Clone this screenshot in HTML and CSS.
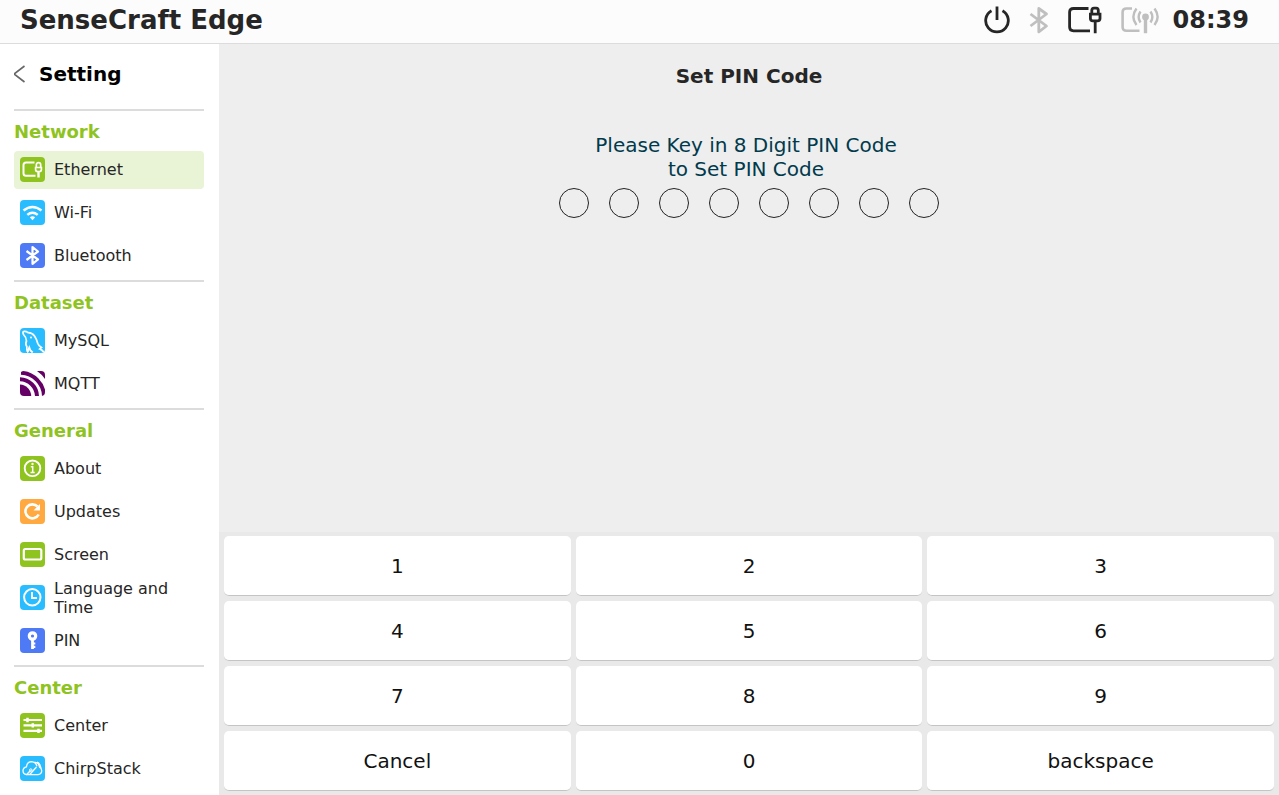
FILE: index.html
```html
<!DOCTYPE html>
<html lang="en">
<head>
<meta charset="utf-8">
<meta name="viewport" content="width=device-width, initial-scale=1">
<title>SenseCraft Edge</title>
<link rel="stylesheet" href="styles.css">
</head>
<body>
<div class="app">
  <header class="topbar">
    <div class="brand">SenseCraft Edge</div>
    <div class="status">
      <div class="status-icons">
        <button class="icon-button" type="button" aria-label="Power">
          <svg width="26" height="28" viewBox="0 0 26 28" fill="none" stroke="#262626" stroke-width="2.800"><path d="M13 .5v13.500"/><path d="M7.500 4.800A11.300 11.300 0 1 0 18.500 4.800"/></svg>
        </button>
        <svg width="20" height="28" viewBox="0 0 20 28" fill="none" stroke="#bfbfbf" stroke-width="2.800" stroke-linejoin="round" role="img" aria-label="Bluetooth"><path d="M1.500 8L17.500 20 9.800 25.800V2.500L17.500 8 1.500 20"/></svg>
        <svg width="34" height="28" viewBox="0 0 34 28" fill="none" stroke="#262626" stroke-width="2.800" role="img" aria-label="Ethernet"><path d="M20.500 2.500H5.500Q1.600 2.500 1.600 6V21Q1.600 24.800 5.500 24.800H22"/><path d="M23.800 7.500V4.600Q23.800 2.200 26 2.200h2.200Q30.300 2.200 30.300 4.600V7.500M22.400 8.200H32V12.500Q32 14.800 29.500 14.800H24.900Q22.400 14.800 22.400 12.500ZM27.200 14.800V27.200"/></svg>
        <svg width="38" height="28" viewBox="0 0 38 28" fill="none" stroke="#bfbfbf" stroke-width="2.600" role="img" aria-label="LoRa"><path d="M11 2.500H5.500Q1.600 2.500 1.600 6V21Q1.600 24.800 5.500 24.800H18.500"/><path d="M24.500 12V27.200" stroke-width="3.400"/><circle cx="24.500" cy="11" r="3.400" fill="#bfbfbf" stroke="none"/><path d="M19.500 5.500Q15.800 11 19.500 16.500M29.500 5.500Q33.200 11 29.500 16.500M15.500 2.500Q9.200 11 15.500 19M33.500 2.500Q39.800 11 33.500 19" stroke-width="2.400"/></svg>
      </div>
      <time class="clock">08:39</time>
    </div>
  </header>

  <div class="body">
    <nav class="sidebar" aria-label="Setting">
      <a class="back" href="#">
        <svg width="12" height="18" viewBox="0 0 12 18" fill="none" stroke="#666" stroke-width="1.600"><path d="M10.500 1L0 9l10.500 8"/></svg>
        <span>Setting</span>
      </a>

      <section class="group">
        <h2 class="group-title">Network</h2>
        <a class="item active" href="#">
          <svg class="tile green" viewBox="0 0 25 25"><path d="M14.500 5.500H6Q3.500 5.500 3.500 8v8.200Q3.500 18.700 6 18.700h9.500" stroke-width="2"/><path d="M15.600 10.500h5.800v2a2 2 0 0 1-2 2h-1.800a2 2 0 0 1-2-2zM16.300 10V8q0-2.300 2.200-2.300T20.700 8v2" stroke-width="1.700"/><path d="M18.500 14v6.500" stroke-width="2.400"/></svg>
          <span>Ethernet</span>
        </a>
        <a class="item" href="#">
          <svg class="tile sky" viewBox="0 0 25 25"><path d="M3.500 10.600q9-7.200 18 0M7.300 14.900q5.200-4.300 10.400 0" stroke-width="2.500"/><path class="solid" d="M9.800 17.300q2.700-2 5.400 0L12.500 20.200z"/></svg>
          <span>Wi-Fi</span>
        </a>
        <a class="item" href="#">
          <svg class="tile blue" viewBox="0 0 25 25"><path d="M6.500 8L18 16.500l-5.500 4.300V4L18 8.500 6.500 17" stroke-width="2.200" stroke-linejoin="round"/></svg>
          <span>Bluetooth</span>
        </a>
      </section>

      <section class="group">
        <h2 class="group-title">Dataset</h2>
        <a class="item" href="#">
          <svg class="tile sky" viewBox="0 0 25 25"><path d="M8 24.500q-1.700-2.500-1.200-6Q5 16 6.500 13 6.500 9.500 3.500 6.500 2.200 3.500 4 3.400q2-.4 4 1.200Q12 4.500 14.500 8q2 3 3.200 7.200.8 2.500 3.800 4.300l-1.700 1.400q2 .8 4.200 3.300" stroke-width="1.700"/><path d="M7.500 24l1.800-4.500 1.200 3 2.200 2" stroke-width="1.900"/><circle class="solid" cx="11" cy="9.500" r="1"/></svg>
          <span>MySQL</span>
        </a>
        <a class="item" href="#">
          <svg class="tile plain" viewBox="0 0 25 25"><defs><clipPath id="tile-clip"><rect width="25" height="25" rx="4"/></clipPath></defs><g clip-path="url(#tile-clip)"><path class="purple" d="M0 13.500A11.800 11.800 0 0 1 11.200 25H0z"/><path class="purple-line" d="M-1 8.200A17.600 17.600 0 0 1 17 26M1 1.800A24 24 0 0 1 24 25" stroke-width="4"/><path class="purple" d="M17 0H25v8Q21.500 3 17 0z"/></g></svg>
          <span>MQTT</span>
        </a>
      </section>

      <section class="group">
        <h2 class="group-title">General</h2>
        <a class="item" href="#">
          <svg class="tile green" viewBox="0 0 25 25"><circle cx="12.500" cy="12.300" r="7.800" stroke-width="1.900"/><path d="M10.800 10.800h1.900v6M10.500 16.500h4.200" stroke-width="1.500"/><circle class="solid" cx="12.500" cy="8" r="1.200"/></svg>
          <span>About</span>
        </a>
        <a class="item" href="#">
          <svg class="tile orange" viewBox="0 0 25 25"><path d="M18.700 15.500A7 7 0 1 1 17.500 7.500" stroke-width="2.600"/><path class="solid" d="M20 5v6.500h-6.500z"/></svg>
          <span>Updates</span>
        </a>
        <a class="item" href="#">
          <svg class="tile green" viewBox="0 0 25 25"><rect x="3.800" y="7" width="17.500" height="10.500" rx="1.500" stroke-width="2.200"/></svg>
          <span>Screen</span>
        </a>
        <a class="item" href="#">
          <svg class="tile sky" viewBox="0 0 25 25"><circle cx="12.300" cy="12.300" r="8.200" stroke-width="2"/><path d="M12 7v6h5" stroke-width="1.900"/></svg>
          <span>Language and Time</span>
        </a>
        <a class="item" href="#">
          <svg class="tile blue" viewBox="0 0 25 25"><circle cx="12.500" cy="8" r="3.200" stroke-width="3.200"/><path d="M12.500 11v10" stroke-width="2.800"/><path d="M13 15.500h2.300M13 18.800h2.300" stroke-width="2.200"/></svg>
          <span>PIN</span>
        </a>
      </section>

      <section class="group">
        <h2 class="group-title">Center</h2>
        <a class="item" href="#">
          <svg class="tile green" viewBox="0 0 25 25"><path d="M3.500 7h18.500M3.500 12.400h18.500M3.500 17.900h18.500" stroke-width="2.100"/><path d="M7.500 4.800v4.400M12.800 10.200v4.400M18.500 15.700v4.400" stroke-width="2.500"/></svg>
          <span>Center</span>
        </a>
        <a class="item" href="#">
          <svg class="tile sky" viewBox="0 0 25 25"><path d="M10.500 14.500L6.500 18.700Q3 18 3 14.800 3 11.500 6.500 10.800 7 5.800 11.500 5.700q3.800 0 5.500 4.500M6.500 18.700H18q3.700-.7 3.700-4 0-2.500-2.500-3.800M9.500 18.700l7-7.700M14.500 6.500q4-.5 5 4.500M17 6q3.500 1.500 4 6" stroke-width="1.300"/><circle cx="10.800" cy="14" r="1.200" stroke-width="1"/></svg>
          <span>ChirpStack</span>
        </a>
      </section>
    </nav>

    <main class="main">
      <h1 class="page-title">Set PIN Code</h1>
      <p class="prompt">Please Key in 8 Digit PIN Code<br>to Set PIN Code</p>
      <div class="dots" role="img" aria-label="0 of 8 digits entered">
        <span class="dot"></span><span class="dot"></span><span class="dot"></span><span class="dot"></span><span class="dot"></span><span class="dot"></span><span class="dot"></span><span class="dot"></span>
      </div>
      <div class="keypad">
        <button class="key" type="button">1</button>
        <button class="key" type="button">2</button>
        <button class="key" type="button">3</button>
        <button class="key" type="button">4</button>
        <button class="key" type="button">5</button>
        <button class="key" type="button">6</button>
        <button class="key" type="button">7</button>
        <button class="key" type="button">8</button>
        <button class="key" type="button">9</button>
        <button class="key" type="button">Cancel</button>
        <button class="key" type="button">0</button>
        <button class="key" type="button">backspace</button>
      </div>
    </main>
  </div>
</div>
</body>
</html>
```
FILE: styles.css
```css
* {
  box-sizing: border-box;
}

body {
  margin: 0;
  font-family: "DejaVu Sans", sans-serif;
  font-size: 16px;
  color: #262626;
  background: #eee;
}

a {
  color: inherit;
  text-decoration: none;
}

svg {
  display: block;
  flex-shrink: 0;
}

.app {
  display: flex;
  flex-direction: column;
  min-height: 100vh;
}

/* Top bar */
.topbar {
  display: flex;
  align-items: center;
  justify-content: space-between;
  height: 44px;
  padding: 0 30px 4px 20px;
  background: #fcfcfc;
  border-bottom: 1px solid #dcdcdc;
}

.brand {
  font-size: 26px;
  font-weight: bold;
}

.status {
  display: flex;
  align-items: center;
  gap: 14px;
}

.status-icons {
  display: flex;
  align-items: center;
  gap: 19px;
}

.icon-button {
  padding: 0;
  border: 0;
  background: none;
}

.clock {
  font-size: 24px;
  font-weight: bold;
}

.body {
  display: flex;
  flex: 1;
}

/* Sidebar */
.sidebar {
  width: 219px;
  flex-shrink: 0;
  padding: 0 15px 0 14px;
  background: #fff;
}

.back {
  display: flex;
  align-items: center;
  gap: 13px;
  height: 60px;
  margin-bottom: 5px;
  font-size: 20px;
  font-weight: bold;
  color: #000;
}

.group {
  display: flex;
  flex-direction: column;
  gap: 5px;
  padding-bottom: 5px;
  border-top: 2px solid #dcdcdc;
}

.group-title {
  margin: 0 0 -7px;
  font-size: 18px;
  line-height: 42px;
  color: #8fc31f;
}

.item {
  display: flex;
  align-items: center;
  gap: 9px;
  height: 38px;
  padding: 0 6px 1px;
  border-radius: 4px;
  line-height: 19px;
}

.active {
  background: #e9f3d6;
}

.tile {
  width: 25px;
  height: 25px;
  border-radius: 4px;
  fill: none;
  stroke: #fff;
}

.solid {
  fill: #fff;
  stroke: none;
}

.green {
  background: #8fc31f;
}

.sky {
  background: #29bdff;
}

.blue {
  background: #4f7af5;
}

.orange {
  background: #ffa940;
}

.plain {
  border-radius: 0;
}

.purple {
  fill: #606;
  stroke: none;
}

.purple-line {
  stroke: #606;
}

/* PIN entry */
.main {
  display: flex;
  flex: 1;
  flex-direction: column;
  align-items: center;
}

.page-title {
  margin: 20px 0 45px;
  font-size: 20px;
  line-height: 24px;
}

.prompt {
  margin: 0 6px 7px 0;
  font-size: 20px;
  line-height: 24px;
  text-align: center;
  color: #003a4c;
}

.dots {
  display: flex;
  gap: 20px;
}

.dot {
  width: 30px;
  height: 30px;
  border: 1px solid #222;
  border-radius: 50%;
}

.keypad {
  display: grid;
  grid-template-columns: repeat(3, 1fr);
  gap: 5px;
  align-self: stretch;
  margin-top: auto;
  padding: 4px 5px;
  background: #e9e9e9;
}

.key {
  height: 60px;
  padding: 0;
  border: 0;
  border-bottom: 1px solid #c4c4c4;
  border-radius: 5px;
  font-family: inherit;
  font-size: 20px;
  color: #111;
  background: #fff;
}
```
